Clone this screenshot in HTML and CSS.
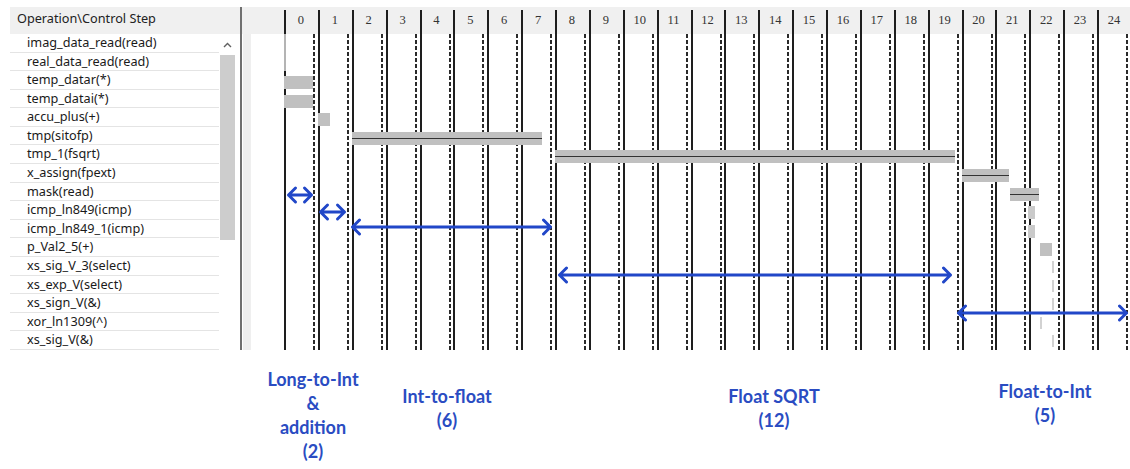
FILE: index.html
```html
<html>

<head>
  <link rel="stylesheet" href="styles.css">
</head>

<body>
  <div class="viewer">
    <div class="ops">
      <div class="ops-head">Operation\Control Step</div>
      <div class="ops-body">
        <ul class="op-list">
          <li>imag_data_read(read)</li>
          <li>real_data_read(read)</li>
          <li>temp_datar(*)</li>
          <li>temp_datai(*)</li>
          <li>accu_plus(+)</li>
          <li>tmp(sitofp)</li>
          <li>tmp_1(fsqrt)</li>
          <li>x_assign(fpext)</li>
          <li>mask(read)</li>
          <li>icmp_ln849(icmp)</li>
          <li>icmp_ln849_1(icmp)</li>
          <li>p_Val2_5(+)</li>
          <li>xs_sig_V_3(select)</li>
          <li>xs_exp_V(select)</li>
          <li>xs_sign_V(&amp;)</li>
          <li>xor_ln1309(^)</li>
          <li>xs_sig_V(&amp;)</li>
        </ul>
        <div class="scrollbar">
          <div class="scroll-up">
            <svg width="9" height="6" viewBox="0 0 9 6"><path d="M1 5 L4.5 1.5 L8 5" fill="none" stroke="#606060" stroke-width="1.4"/></svg>
          </div>
          <div class="thumb"></div>
        </div>
      </div>
    </div>

    <div class="divider"></div>

    <div class="chart">
      <div class="steps">
        <div class="lead"></div>
        <div class="step">0</div><div class="step">1</div><div class="step">2</div><div class="step">3</div><div class="step">4</div>
        <div class="step">5</div><div class="step">6</div><div class="step">7</div><div class="step">8</div><div class="step">9</div>
        <div class="step">10</div><div class="step">11</div><div class="step">12</div><div class="step">13</div><div class="step">14</div>
        <div class="step">15</div><div class="step">16</div><div class="step">17</div><div class="step">18</div><div class="step">19</div>
        <div class="step">20</div><div class="step">21</div><div class="step">22</div><div class="step">23</div><div class="step">24</div>
      </div>

      <div class="grid">
        <div class="lead"></div>
        <div class="col"></div><div class="col"></div><div class="col"></div><div class="col"></div><div class="col"></div>
        <div class="col"></div><div class="col"></div><div class="col"></div><div class="col"></div><div class="col"></div>
        <div class="col"></div><div class="col"></div><div class="col"></div><div class="col"></div><div class="col"></div>
        <div class="col"></div><div class="col"></div><div class="col"></div><div class="col"></div><div class="col"></div>
        <div class="col"></div><div class="col"></div><div class="col"></div><div class="col"></div><div class="col"></div>

        <div class="rows">
          <div class="row"><div class="bar stub" style="left:0;width:2px"></div></div>
          <div class="row"><div class="bar stub" style="left:0;width:2px"></div></div>
          <div class="row"><div class="bar" style="left:0;width:29px"></div></div>
          <div class="row"><div class="bar" style="left:0;width:29px"></div></div>
          <div class="row"><div class="bar" style="left:34px;width:12px"></div></div>
          <div class="row"><div class="bar line" style="left:68px;width:190px"></div></div>
          <div class="row"><div class="bar line" style="left:271px;width:400px"></div></div>
          <div class="row"><div class="bar line" style="left:678px;width:47px"></div></div>
          <div class="row"><div class="bar line" style="left:726px;width:29px"></div></div>
          <div class="row"><div class="bar soft" style="left:744px;width:7px"></div></div>
          <div class="row"><div class="bar soft" style="left:744px;width:7px"></div></div>
          <div class="row"><div class="bar" style="left:756px;width:12px"></div></div>
          <div class="row"><div class="bar tick" style="left:768px;width:2px"></div></div>
          <div class="row"><div class="bar tick" style="left:768px;width:2px"></div></div>
          <div class="row"><div class="bar tick" style="left:768px;width:2px"></div></div>
          <div class="row"><div class="bar tick" style="left:756px;width:2px"></div></div>
          <div class="row"><div class="bar tick" style="left:768px;width:2px"></div></div>
        </div>
      </div>
    </div>

    <!-- latency annotations drawn over the chart -->
    <svg class="arrows" width="1130" height="350" viewBox="0 0 1130 350">
      <g fill="none" stroke="#2147c8" stroke-width="3" stroke-linecap="round" stroke-linejoin="round">
        <path d="M288.5 195 H311.5 M295.5 188 L288.5 195 L295.5 202 M304.5 188 L311.5 195 L304.5 202"/>
        <path d="M320.5 212 H344.5 M327.5 205 L320.5 212 L327.5 219 M337.5 205 L344.5 212 L337.5 219"/>
        <path d="M352.5 227 H550.5 M359.5 220 L352.5 227 L359.5 234 M543.5 220 L550.5 227 L543.5 234"/>
        <path d="M559.5 275 H950.5 M566.5 268 L559.5 275 L566.5 282 M943.5 268 L950.5 275 L943.5 282"/>
        <path d="M958.5 313 H1126.5 M965.5 306 L958.5 313 L965.5 320 M1119.5 306 L1126.5 313 L1119.5 320"/>
      </g>
    </svg>
  </div>

  <div class="labels">
    <div class="label first">Long-to-Int<br>&amp;<br>addition<br>(2)</div>
    <div class="label second">Int-to-float<br>(6)</div>
    <div class="label third">Float SQRT<br>(12)</div>
    <div class="label fourth">Float-to-Int<br>(5)</div>
  </div>
</body>

</html>
```

FILE: styles.css
```css
body {
  margin: 0;
  background: #ffffff;
  font-family: "Noto Sans", sans-serif;
}

.viewer {
  position: relative;
  display: flex;
  height: 350px;
  padding-top: 7px;
  box-sizing: border-box;
}

.ops {
  width: 230px;
  margin-left: 10px;
  display: flex;
  flex-direction: column;
}

.ops-head {
  height: 27px;
  flex: none;
  background: #f0f0f0;
  padding-left: 7px;
  font-size: 12.7px;
  line-height: 22px;
  color: #222222;
}

.ops-body {
  display: flex;
  flex: 1;
}

.op-list {
  list-style: none;
  margin: 0;
  padding: 0;
  width: 209px;
}

.op-list li {
  height: 18.58px;
  box-sizing: border-box;
  border-bottom: 1px solid #e4e4e4;
  padding-left: 17px;
  font-size: 12.7px;
  line-height: 17px;
  color: #1a1a1a;
  white-space: nowrap;
}

.scrollbar {
  width: 17px;
  display: flex;
  flex-direction: column;
  align-items: center;
}

.scroll-up {
  height: 21px;
  display: flex;
  align-items: center;
  justify-content: center;
}

.thumb {
  width: 15px;
  height: 185px;
  background: #cdcdcd;
}

.divider {
  width: 2px;
  flex: none;
  background: #707070;
}

.chart {
  flex: 1;
  display: flex;
  flex-direction: column;
  overflow: hidden;
}

.steps {
  height: 27px;
  flex: none;
  display: flex;
  background: #f0f0f0;
}

.lead {
  width: 42px;
  flex: none;
  box-sizing: border-box;
}

.step {
  width: 33.875px;
  flex: none;
  position: relative;
  text-align: center;
  font-family: "Liberation Serif", serif;
  font-size: 12.5px;
  line-height: 26px;
  color: #333333;
}

.step::before {
  content: "";
  position: absolute;
  left: 0;
  top: 3px;
  bottom: 0;
  width: 2px;
  background: #1e1e1e;
}

.grid {
  flex: 1;
  display: flex;
  position: relative;
}

.grid .lead {
  border-left: 8px solid #efefef;
  margin-left: 1px;
  width: 41px;
}

.col {
  width: 33.875px;
  flex: none;
  position: relative;
}

.col::before {
  content: "";
  position: absolute;
  left: 0;
  top: 0;
  bottom: 0;
  width: 2px;
  background: #1e1e1e;
}

.col::after {
  content: "";
  position: absolute;
  left: 29px;
  top: 0;
  bottom: 0;
  width: 2px;
  background: repeating-linear-gradient(to bottom, #2a2a2a 0 4px, transparent 4px 6px);
}

.rows {
  position: absolute;
  top: 0;
  left: 42px;
  right: 0;
  bottom: 0;
}

.row {
  height: 18.58px;
  position: relative;
}

.bar {
  position: absolute;
  top: 5px;
  height: 13px;
  background: #c0c0c0;
}

.bar.line::after {
  content: "";
  position: absolute;
  left: 0;
  right: 0;
  top: 6px;
  height: 1px;
  background: #333333;
}

.bar.stub {
  top: 0;
  height: 100%;
  background: #b4b4b4;
}

.bar.soft {
  background: #cacaca;
}

.bar.tick {
  top: 4px;
  height: 12px;
  background: #d2d2d2;
}

.arrows {
  position: absolute;
  left: 0;
  top: 0;
  pointer-events: none;
}

.labels {
  display: flex;
  align-items: flex-start;
  padding-left: 253px;
}

.label {
  text-align: center;
  font-family: Lato, "Open Sans", sans-serif;
  font-weight: bold;
  font-size: 18px;
  line-height: 24px;
  color: #2a4cc2;
}

.first {
  width: 120px;
  margin-top: 17px;
}

.second {
  width: 120px;
  margin-left: 14px;
  margin-top: 34px;
}

.third {
  width: 160px;
  margin-left: 187px;
  margin-top: 34px;
}

.fourth {
  width: 160px;
  margin-left: 111px;
  margin-top: 29px;
}
```
